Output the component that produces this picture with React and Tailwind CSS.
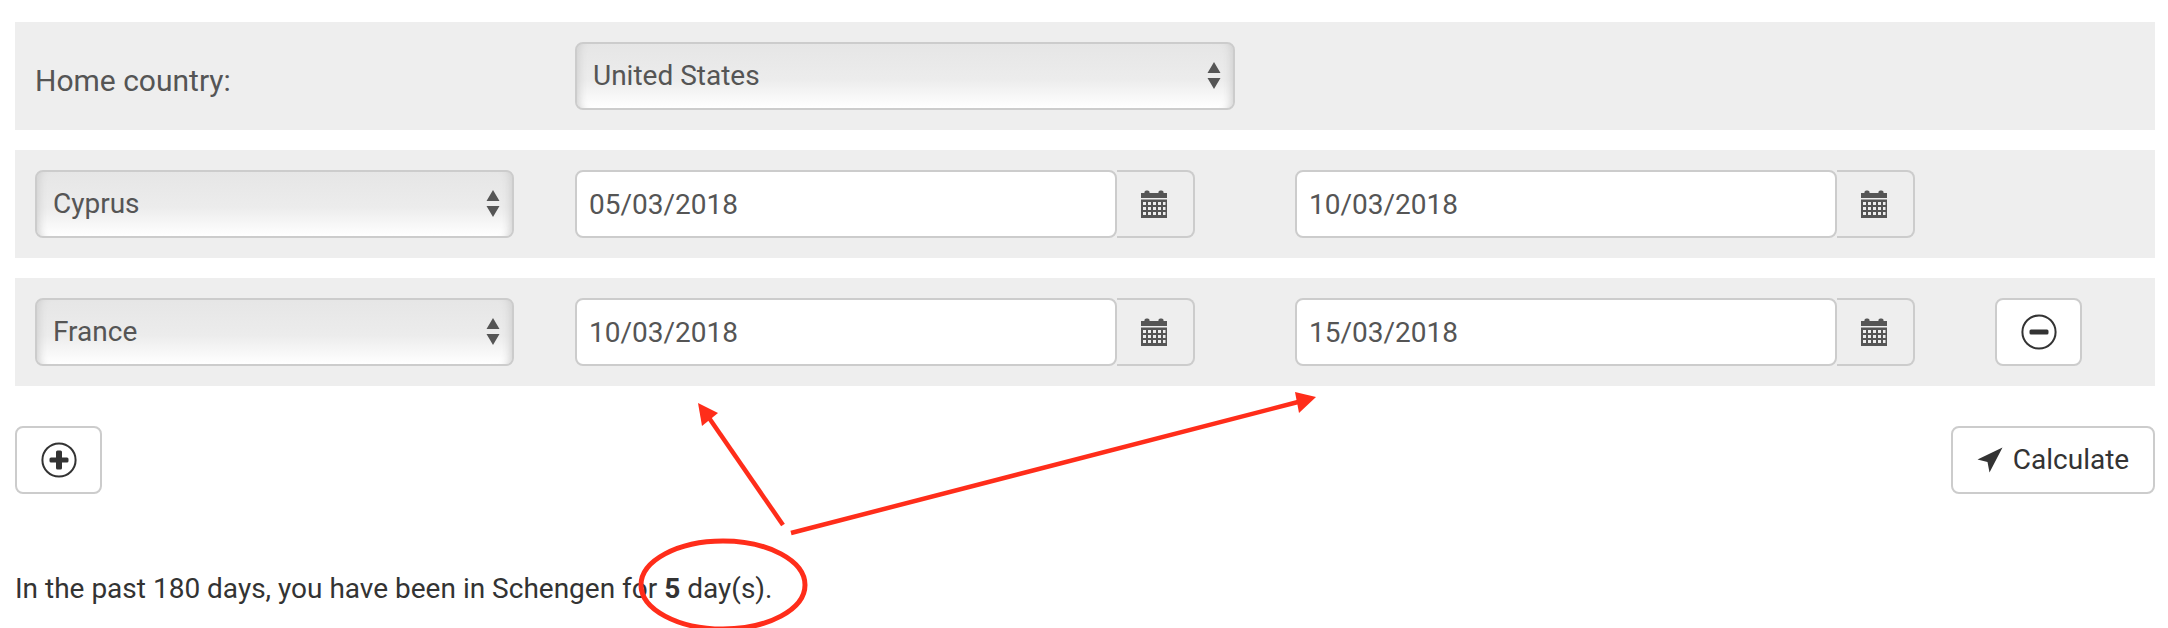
import React from 'react';

const Calendar = () => (
    <svg width="26" height="28" viewBox="0 0 26 28" className="fill-[#555]">
        <path d="M0 3h3.5a2 2 0 0 1 2-2.6h1a2 2 0 0 1 2 2.6h9a2 2 0 0 1 2-2.6h1a2 2 0 0 1 2 2.6H26v5H0z" />
        <path fillRule="evenodd" d="M0 9.5h26V28H0z
            M2 12v3h3v-3z M7 12v3h3v-3z M12 12v3h3v-3z M17 12v3h3v-3z M22 12v3h2.5v-3z
            M2 17v3h3v-3z M7 17v3h3v-3z M12 17v3h3v-3z M17 17v3h3v-3z M22 17v3h2.5v-3z
            M2 22v3h3v-3z M7 22v3h3v-3z M12 22v3h3v-3z M17 22v3h3v-3z M22 22v3h2.5v-3z" />
    </svg>
);

const CircleIcon = ({ plus }) => (
    <svg width="36" height="36" viewBox="0 0 36 36">
        <circle cx="18" cy="18" r="16.6" fill="none" stroke="#333" strokeWidth="2" />
        <rect x="8.5" y="15.5" width="19" height="5" rx="1.5" fill="#333" />
        {plus && <rect x="15" y="8.5" width="6" height="19" rx="1.5" fill="#333" />}
    </svg>
);

const Send = () => (
    <svg width="26" height="26" viewBox="0 0 26 26" className="fill-[#333]">
        <path d="M0.5 12.5 L25.5 0.5 L12.5 25.5 L10.5 15 Z" />
    </svg>
);

const CountrySelect = ({ value, className }) => (
    <div className={`relative h-[68px] ${className}`}>
        <select
            defaultValue={value}
            className="w-full h-full appearance-none rounded-lg border-2 border-[#ccc] bg-gradient-to-b from-[#e6e6e6] via-[#ececec] via-[55%] to-white pl-4 text-[28px] text-[#555] shadow-[inset_10px_0_8px_-8px_#cfcfcf,inset_-10px_0_8px_-8px_#cfcfcf]"
        >
            <option>{value}</option>
        </select>
        <svg width="14" height="28" viewBox="0 0 14 28" className="absolute right-[14px] top-[20px] fill-[#555]">
            <path d="M7 0 L13.5 11 H0.5 Z M0.5 16 H13.5 L7 27 Z" />
        </svg>
    </div>
);

const DateInput = ({ value, inputWidth, addonWidth }) => (
    <div className="flex h-[68px]">
        <input
            readOnly
            value={value}
            style={{ width: inputWidth }}
            className="h-full rounded-lg border-2 border-[#ccc] bg-white px-3 text-[28px] text-[#555]"
        />
        <div
            style={{ width: addonWidth }}
            className="flex h-full items-center justify-center rounded-r-lg border-2 border-l-0 border-[#ccc] bg-[#eee] pr-[2px]"
        >
            <Calendar />
        </div>
    </div>
);

const Btn = ({ children, className = '' }) => (
    <button className={`flex h-[68px] items-center justify-center rounded-lg border-2 border-[#ccc] bg-white ${className}`}>
        {children}
    </button>
);

const DateRow = ({ country, from, to, removable }) => (
    <div className="mb-5 flex h-[108px] items-center bg-[#eee] pl-5">
        <CountrySelect value={country} className="w-[479px]" />
        <div className="ml-[61px]">
            <DateInput value={from} inputWidth={542} addonWidth={78} />
        </div>
        <div className="ml-[100px]">
            <DateInput value={to} inputWidth={542} addonWidth={78} />
        </div>
        {removable && (
            <Btn className="ml-[80px] w-[87px]">
                <CircleIcon />
            </Btn>
        )}
    </div>
);

export default function App() {
    return (
        <div className="relative h-[628px] overflow-hidden bg-white pl-[15px] pr-[13px] pt-[22px] font-['Roboto',sans-serif] text-[#333]">
            {/* Home country */}
            <div className="mb-5 flex h-[108px] items-center bg-[#eee] pl-5">
                <label className="w-[540px] pt-[8px] text-[30px] text-[#555]">Home country:</label>
                <CountrySelect value="United States" className="w-[660px]" />
            </div>

            <DateRow country="Cyprus" from="05/03/2018" to="10/03/2018" />
            <DateRow country="France" from="10/03/2018" to="15/03/2018" removable />

            <div className="mt-10 flex justify-between">
                <Btn className="w-[87px]">
                    <CircleIcon plus />
                </Btn>
                <Btn className="w-[204px] gap-[10px] text-[28px] text-[#333]">
                    <Send />
                    Calculate
                </Btn>
            </div>

            <p className="mt-[75px] text-[28px] leading-[40px]">
                In the past 180 days, you have been in Schengen for <b>5</b> day(s).
            </p>

            {/* red annotations drawn over the screenshot */}
            <svg width="2168" height="628" className="pointer-events-none absolute left-0 top-0">
                <ellipse cx="723" cy="585" rx="82" ry="44" fill="none" stroke="#ff2d1a" strokeWidth="5" />
                <line x1="783" y1="525" x2="707" y2="415" stroke="#ff2d1a" strokeWidth="4.5" />
                <polygon points="698,403 718,413 702,426" fill="#ff2d1a" />
                <line x1="791" y1="533" x2="1298" y2="402" stroke="#ff2d1a" strokeWidth="4.5" />
                <polygon points="1316,397 1295,392 1299,413" fill="#ff2d1a" />
            </svg>
        </div>
    );
}
